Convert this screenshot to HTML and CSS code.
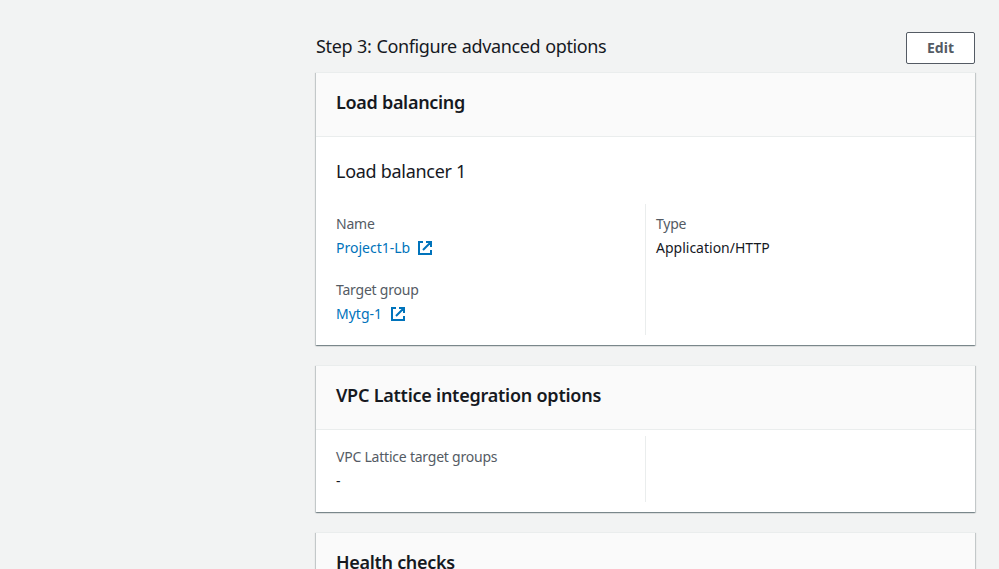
FILE: index.html
```html
<!DOCTYPE html>
<html lang="en">
<head>
<meta charset="utf-8">
<title>Review</title>
<link rel="stylesheet" href="styles.css">
</head>
<body>
<main class="review">
  <header class="step-header">
    <h2 class="step-title">Step 3: Configure advanced options</h2>
    <button class="edit">Edit</button>
  </header>

  <section class="card">
    <div class="card-header"><h3>Load balancing</h3></div>
    <div class="card-body balancer">
      <h4>Load balancer 1</h4>
      <div class="columns">
        <div class="column">
          <div class="field">
            <div class="label">Name</div>
            <a class="value link">Project1-Lb<svg class="external" viewBox="0 0 16 16"><path d="M6 2H2v12h12v-4M9 2h5v5M6 10l8-8"/></svg></a>
          </div>
          <div class="field">
            <div class="label">Target group</div>
            <a class="value link group-link">Mytg-1<svg class="external" viewBox="0 0 16 16"><path d="M6 2H2v12h12v-4M9 2h5v5M6 10l8-8"/></svg></a>
          </div>
        </div>
        <div class="column divided">
          <div class="field">
            <div class="label">Type</div>
            <div class="value">Application/HTTP</div>
          </div>
        </div>
      </div>
    </div>
  </section>

  <section class="card">
    <div class="card-header"><h3 class="lattice-title">VPC Lattice integration options</h3></div>
    <div class="card-body lattice">
      <div class="columns">
        <div class="column">
          <div class="field">
            <div class="label">VPC Lattice target groups</div>
            <div class="value">-</div>
          </div>
        </div>
        <div class="column divided"></div>
      </div>
    </div>
  </section>

  <section class="card">
    <div class="card-header"><h3>Health checks</h3></div>
  </section>
</main>
</body>
</html>
```
FILE: styles.css
```css
* { box-sizing: border-box; }
html, body { height: 100%; }
body {
  margin: 0;
  overflow: hidden;
  background: #f2f3f3;
  color: #16191f;
  font: 14px/22px "Noto Sans", "Open Sans", sans-serif;
}
h2, h3, h4 { margin: 0; font-size: 18px; line-height: 22px; font-weight: 400; letter-spacing: -.29px; }
.review { width: 660px; height: 100%; margin-left: 316px; padding-top: 32px; overflow: visible; }
.step-header { display: flex; justify-content: space-between; height: 40px; padding-right: 1px; }
.step-title { padding-top: 3px; letter-spacing: -.36px; word-spacing: .6px; }
.edit {
  width: 69px;
  height: 32px;
  padding: 0;
  border: 1px solid #545b64;
  border-radius: 2px;
  background: #fff;
  color: #545b64;
  font: 700 14px/22px "Noto Sans", sans-serif;
}
.card {
  width: 659px;
  margin-bottom: 20px;
  background: #fff;
  box-shadow: 0 1px 1px 0 rgba(0, 28, 36, .3), 1px 1px 1px 0 rgba(0, 28, 36, .15), -1px 1px 1px 0 rgba(0, 28, 36, .15);
}
.card-header { height: 65px; padding: 18px 20px; background: #fafafa; border-top: 1px solid #eaeded; border-bottom: 1px solid #eaeded; }
.card-header h3 { font-weight: 600; letter-spacing: -.3px; }
.card-header .lattice-title { letter-spacing: -.24px; }
.balancer { height: 208px; padding: 23px 20px 10px; }
.balancer .columns { height: 131px; margin-top: 22px; }
.lattice { height: 82px; padding: 6px 20px 10px; }
.lattice .column { padding-top: 10px; }
.columns { display: grid; grid-template-columns: 309px 1fr; height: 66px; }
.column { padding-top: 9px; }
.divided { border-left: 1px solid #eaeded; padding-left: 10px; }
.field { margin-bottom: 20px; }
.field:last-child { margin-bottom: 0; }
.label { color: #545b64; height: 22px; margin-bottom: 1px; letter-spacing: -.22px; }
.value { display: flex; align-items: center; height: 24px; margin-bottom: -1px; }
.link { color: #0073bb; }
.external { width: 16px; height: 16px; margin-left: 7px; fill: none; stroke: currentColor; stroke-width: 2; }
.group-link .external { margin-left: 8px; }
```
